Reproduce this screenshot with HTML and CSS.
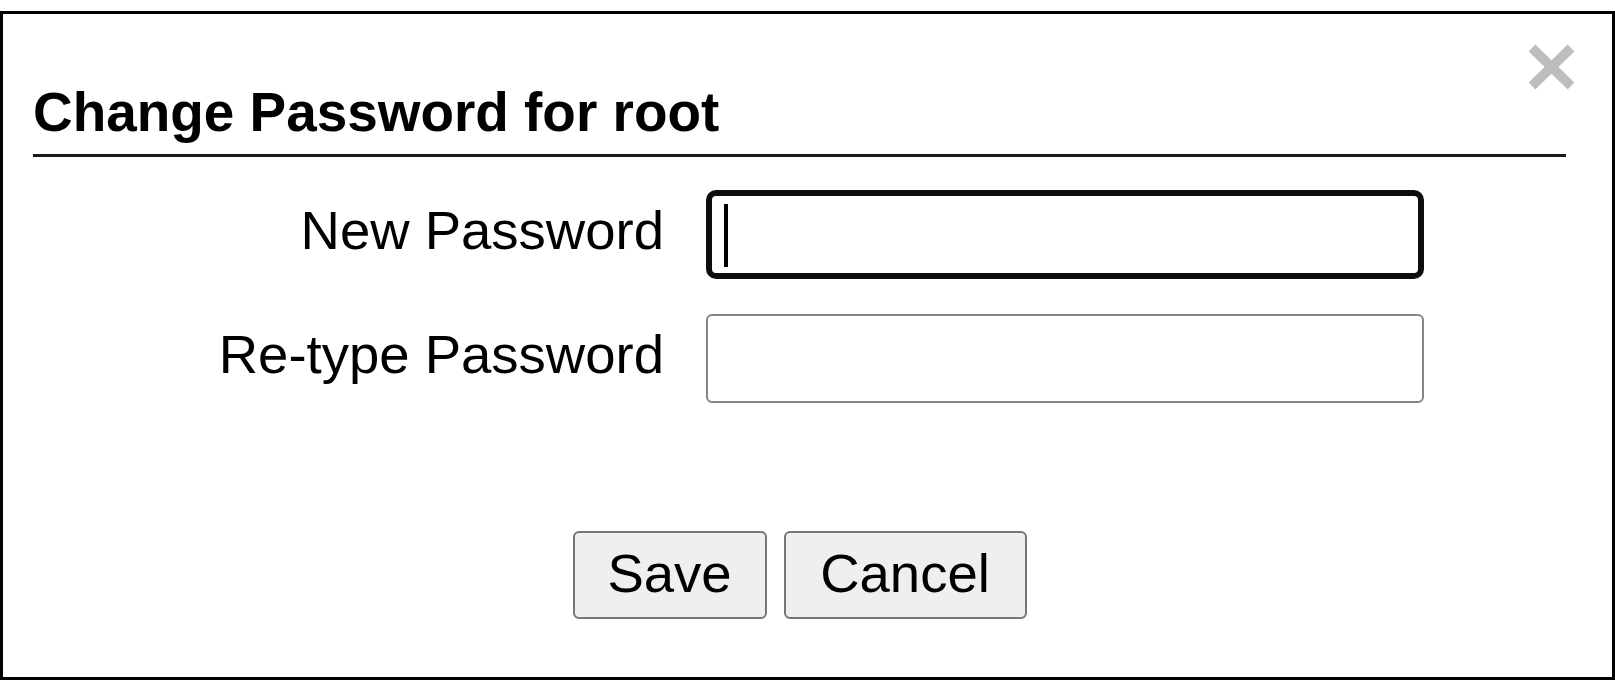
FILE: index.html
```html
<!DOCTYPE html>
<html lang="en">
<head>
<meta charset="utf-8">
<title>Change Password</title>
<link rel="stylesheet" href="styles.css">
</head>
<body>
<div class="dialog">
  <button class="close" type="button" aria-label="Close">
    <svg width="49" height="46" viewBox="0 0 49 46">
      <line x1="5" y1="4" x2="44" y2="42" stroke="#bdbdbd" stroke-width="9.5"/>
      <line x1="44" y1="4" x2="5" y2="42" stroke="#bdbdbd" stroke-width="9.5"/>
    </svg>
  </button>
  <h2 class="title">Change Password for root</h2>
  <div class="form">
    <label class="label" for="pw1">New Password</label>
    <div class="field field-focus"><input id="pw1" class="input input-focus" type="password"></div>
    <label class="label" for="pw2">Re-type Password</label>
    <div class="field"><input id="pw2" class="input" type="password"></div>
  </div>
  <div class="actions">
    <button class="btn btn-save" type="button">Save</button>
    <button class="btn btn-cancel" type="button">Cancel</button>
  </div>
</div>
</body>
</html>
```

FILE: styles.css
```css
html, body {
  margin: 0;
  padding: 0;
  background: #ffffff;
}
body {
  font-family: "Liberation Sans", Arial, sans-serif;
  color: #000;
}
.dialog {
  position: relative;
  box-sizing: border-box;
  margin-top: 11px;
  height: 669px;
  border: 3px solid #000;
  padding: 67px 46px 0 30px;
  background: #fff;
}
.close {
  position: absolute;
  top: 30px;
  right: 36px;
  width: 49px;
  height: 46px;
  padding: 0;
  border: 0;
  background: transparent;
  display: block;
}
.close svg {
  display: block;
}
.title {
  margin: 0;
  font-size: 54.9px;
  line-height: 63px;
  font-weight: 700;
  padding-bottom: 10px;
  border-bottom: 3px solid #1a1a1a;
}
.form {
  margin-top: 33px;
  display: grid;
  grid-template-columns: 631px 718px;
  column-gap: 42px;
  row-gap: 35px;
}
.label {
  font-size: 54.5px;
  line-height: 63px;
  text-align: right;
  padding-top: 9px;
}
.field {
  position: relative;
  height: 89px;
}
.input {
  box-sizing: border-box;
  width: 718px;
  height: 89px;
  margin: 0;
  border: 2px solid #858585;
  border-radius: 6px;
  background: #fff;
  outline: none;
  font-size: 54.5px;
  display: block;
}
.input-focus {
  border: 6px solid #0d0d0d;
  border-radius: 10px;
}
.field-focus::after {
  content: "";
  position: absolute;
  left: 18px;
  top: 14px;
  width: 4px;
  height: 63px;
  background: #000;
}
.actions {
  margin-top: 128px;
  display: flex;
  justify-content: center;
  gap: 17px;
}
.btn {
  box-sizing: border-box;
  height: 88px;
  padding: 9px 0 12px;
  margin: 0;
  border: 2px solid #767676;
  border-radius: 6px;
  background: #efefef;
  color: #000;
  font-family: "Liberation Sans", Arial, sans-serif;
  font-size: 54.5px;
  line-height: 63px;
  text-align: center;
}
.btn-save {
  width: 194px;
}
.btn-cancel {
  width: 243px;
}
```
